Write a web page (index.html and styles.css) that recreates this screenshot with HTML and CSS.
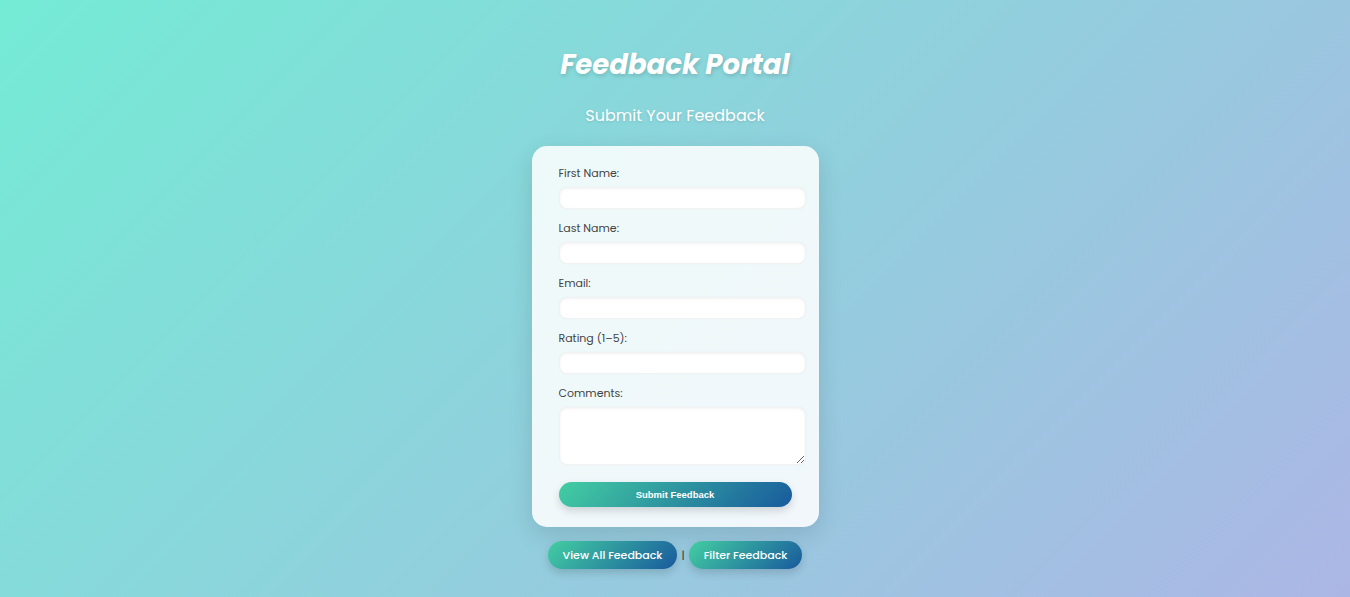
FILE: index.html
```html
<!DOCTYPE html>
<html lang="en">
<head>
<meta charset="utf-8">
<title>Feedback Portal</title>
<link rel="stylesheet" href="styles.css">
</head>
<body>
<main class="page">
  <h1 class="title">Feedback Portal</h1>
  <h2 class="subtitle">Submit Your Feedback</h2>
  <form class="card">
    <label class="label" for="fn">First Name:</label>
    <input class="field" id="fn" type="text">
    <label class="label" for="ln">Last Name:</label>
    <input class="field" id="ln" type="text">
    <label class="label" for="em">Email:</label>
    <input class="field" id="em" type="email">
    <label class="label" for="rt">Rating (1–5):</label>
    <input class="field" id="rt" type="text">
    <label class="label" for="cm">Comments:</label>
    <textarea class="field area" id="cm"></textarea>
    <button class="submit" type="button">Submit Feedback</button>
  </form>
  <nav class="links">
    <a class="pill" href="#">View All Feedback</a>
    <span class="sep">|</span>
    <a class="pill" href="#">Filter Feedback</a>
  </nav>
</main>
</body>
</html>
```

FILE: styles.css
```css
html, body {
  margin: 0;
  height: 100%;
}
body {
  background: linear-gradient(135deg, #74ebd5 0%, #acb6e5 100%);
  font-family: "Poppins", "Open Sans", "Noto Sans", sans-serif;
  color: #444;
}
.page {
  display: flex;
  flex-direction: column;
  align-items: center;
  padding-top: 48px;
}
.title {
  margin: 0;
  font-size: 27.5px;
  line-height: 34px;
  font-style: italic;
  font-weight: 700;
  color: #fff;
  letter-spacing: 0;
  text-shadow: 1px 2px 4px rgba(0, 0, 0, 0.15);
}
.subtitle {
  margin: 24px 0 0;
  font-size: 16px;
  line-height: 20px;
  font-weight: 400;
  color: #fff;
  text-shadow: 0 1px 3px rgba(0, 0, 0, 0.12);
}
.card {
  margin-top: 20px;
  width: 287px;
  box-sizing: border-box;
  padding: 19px 27px 20px;
  display: flex;
  flex-direction: column;
  background: rgba(255, 255, 255, 0.86);
  border-radius: 15px;
  box-shadow: 0 8px 24px rgba(0, 0, 0, 0.12);
}
.label {
  font-size: 11px;
  line-height: 16px;
  color: #444;
  margin-bottom: 6px;
}
.field {
  width: 100%;
  height: 20px;
  padding: 0 6px;
  margin: 0 0 11px;
  border: 1px solid #f2f2f2;
  border-radius: 8px;
  background: #fff;
  box-shadow: inset 0 1px 3px rgba(0, 0, 0, 0.05), 0 0 2px rgba(0, 0, 0, 0.04);
  box-sizing: content-box;
  font-family: inherit;
  outline: none;
}
.area {
  height: 56px;
  margin-bottom: 17px;
  resize: vertical;
}
.submit {
  height: 25px;
  width: 100%;
  border: none;
  border-radius: 13px;
  background: linear-gradient(135deg, #43cea2 0%, #185a9d 100%);
  color: #fff;
  font-family: "Liberation Sans", Arial, sans-serif;
  font-weight: 700;
  font-size: 9.5px;
  box-shadow: 0 4px 8px rgba(0, 0, 0, 0.15);
  cursor: pointer;
}
.links {
  margin-top: 14px;
  display: flex;
  align-items: center;
  gap: 4px;
}
.pill {
  height: 28px;
  line-height: 28px;
  padding: 0 15px;
  border-radius: 14px;
  background: linear-gradient(135deg, #43cea2 0%, #185a9d 100%);
  color: #fff;
  text-decoration: none;
  font-size: 11px;
  font-weight: 500;
  box-shadow: 0 4px 8px rgba(0, 0, 0, 0.15);
}
.sep {
  font-size: 11px;
  color: #333;
}
```
